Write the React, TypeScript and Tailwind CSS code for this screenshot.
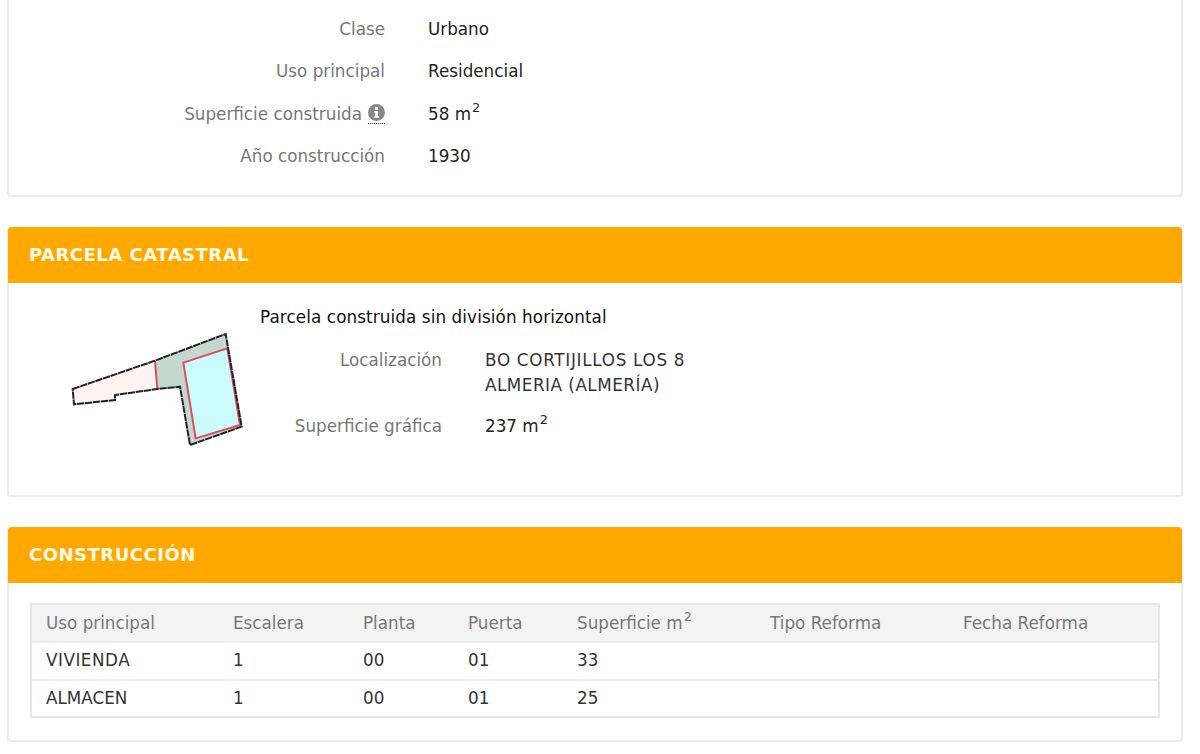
const font = "font-['DejaVu_Sans',Verdana,sans-serif]";

function Field({ label, children, info }: { label: string; children: React.ReactNode; info?: boolean }) {
  return (
    <div className="flex h-[42.5px] items-center">
      <div className="flex w-[376px] items-center justify-end text-[#777]">
        <span>{label}</span>
        {info && (
          <span className="ml-[6px] border-b border-dotted border-[#333] pb-[2px]">
            <svg width="17" height="17" viewBox="0 0 16 16" className="block">
              <circle cx="8" cy="8" r="8" fill="#888" />
              <rect x="6.6" y="3" width="2.8" height="2.4" fill="#fff" />
              <path d="M5.8 6.6h3.6v5h1v1.4H5.8v-1.4h1v-3.6h-1z" fill="#fff" />
            </svg>
          </span>
        )}
      </div>
      <div className="ml-[43px] text-[#222]">{children}</div>
    </div>
  );
}

function M2({ value }: { value: string }) {
  return (
    <span>
      {value} m<sup className="relative top-[-8px] ml-[1px] align-baseline text-[13px]">2</sup>
    </span>
  );
}

function CardHeader({ title }: { title: string }) {
  return (
    <div className="-mx-[1px] flex h-[56px] items-center rounded-t-[4px] bg-[#ffa800] px-[21px] pb-[1px] text-[18px] font-bold tracking-[0.5px] text-[#fff9e8]">
      {title}
    </div>
  );
}

function ParcelShape() {
  return (
    <svg width="210" height="135" viewBox="0 0 630 405" className="shrink-0">
      <path d="M68 207 315 122 322 207 195 225 195 240 72 253Z" fill="#fdf3f3" />
      <path d="M315 122 527 42 575 320 420 375 390 200 322 207Z" fill="#c5d8d0" />
      <path d="M400 128 532 85 570 315 437 355Z" fill="#ccfbfd" />
      <path d="M315 122 322 207M400 128 532 85 570 315 437 355Z" fill="none" stroke="#d9505a" strokeWidth="6" />
      <path
        d="M68 207 315 122 527 42 575 320 420 375 390 200 322 207 195 225 195 240 72 253Z"
        fill="none"
        stroke="#222"
        strokeWidth="6"
        strokeDasharray="22 2"
      />
    </svg>
  );
}

const columns = [
  { name: "Uso principal", width: "w-[187px]" },
  { name: "Escalera", width: "w-[130px]" },
  { name: "Planta", width: "w-[105px]" },
  { name: "Puerta", width: "w-[109px]" },
  { name: "Superficie", width: "w-[193px]" },
  { name: "Tipo Reforma", width: "w-[193px]" },
  { name: "Fecha Reforma", width: "flex-1" },
];

const rows = [
  ["VIVIENDA", "1", "00", "01", "33", "", ""],
  ["ALMACEN", "1", "00", "01", "25", "", ""],
];

export default function App() {
  return (
    <div className={`${font} h-[754px] w-[1200px] overflow-hidden bg-white text-[16.8px]`}>
      <div className="flex flex-col gap-[30px] pl-[7px] pr-[17px]">
        {/* Datos del inmueble */}
        <div className="h-[197px] rounded-b-[4px] border-x-2 border-b-2 border-[#ebebeb] pt-[8px]">
          <Field label="Clase">Urbano</Field>
          <Field label="Uso principal">Residencial</Field>
          <Field label="Superficie construida" info>
            <M2 value="58" />
          </Field>
          <Field label="Año construcción">1930</Field>
        </div>

        {/* Parcela */}
        <div className="h-[270px] rounded-[4px] border-x-2 border-b-2 border-[#ebebeb]">
          <CardHeader title="PARCELA CATASTRAL" />
          <div className="flex pl-[41px] pt-[21px]">
            <div className="mt-[16px]">
              <ParcelShape />
            </div>
            <div className="pt-[2px]">
              <div className="flex h-[24px] items-center tracking-[0.1px] text-[#111]">
                Parcela construida sin división horizontal
              </div>
              <div className="mt-[18px] flex">
                <div className="w-[182px] text-right text-[#777]">Localización</div>
                <div className="ml-[43px] leading-[25px] text-[#333]">
                  <div className="tracking-[0.7px]">BO CORTIJILLOS LOS 8</div>
                  <div className="tracking-[0.5px]">ALMERIA (ALMERÍA)</div>
                </div>
              </div>
              <div className="mt-[16px] flex">
                <div className="w-[182px] text-right text-[#777]">Superficie gráfica</div>
                <div className="ml-[43px] text-[#222]">
                  <M2 value="237" />
                </div>
              </div>
            </div>
          </div>
        </div>

        {/* Construccion */}
        <div className="h-[215px] rounded-[4px] border-x-2 border-b-2 border-[#ebebeb]">
          <CardHeader title="CONSTRUCCIÓN" />
          <div className="px-[21px] pt-[20px]">
            <div className="border-2 border-[#e6e6e6]">
              <div className="flex h-[36px] items-center bg-[#f3f3f3] px-[14px] pt-[2px] text-[#777]">
                {columns.map((c) => (
                  <div key={c.name} className={c.width}>
                    {c.name === "Superficie" ? (
                      <span>
                        Superficie m<sup className="relative top-[-8px] ml-[1px] align-baseline text-[13px]">2</sup>
                      </span>
                    ) : (
                      c.name
                    )}
                  </div>
                ))}
              </div>
              {rows.map((row, i) => (
                <div key={i} className="flex h-[37.5px] items-center border-t-2 border-[#eeeeee] px-[14px] text-[#333]">
                  {row.map((cell, j) => (
                    <div key={j} className={`${columns[j].width} ${cell === "VIVIENDA" ? "tracking-[0.5px]" : ""}`}>
                      {cell}
                    </div>
                  ))}
                </div>
              ))}
            </div>
          </div>
        </div>
      </div>
    </div>
  );
}
